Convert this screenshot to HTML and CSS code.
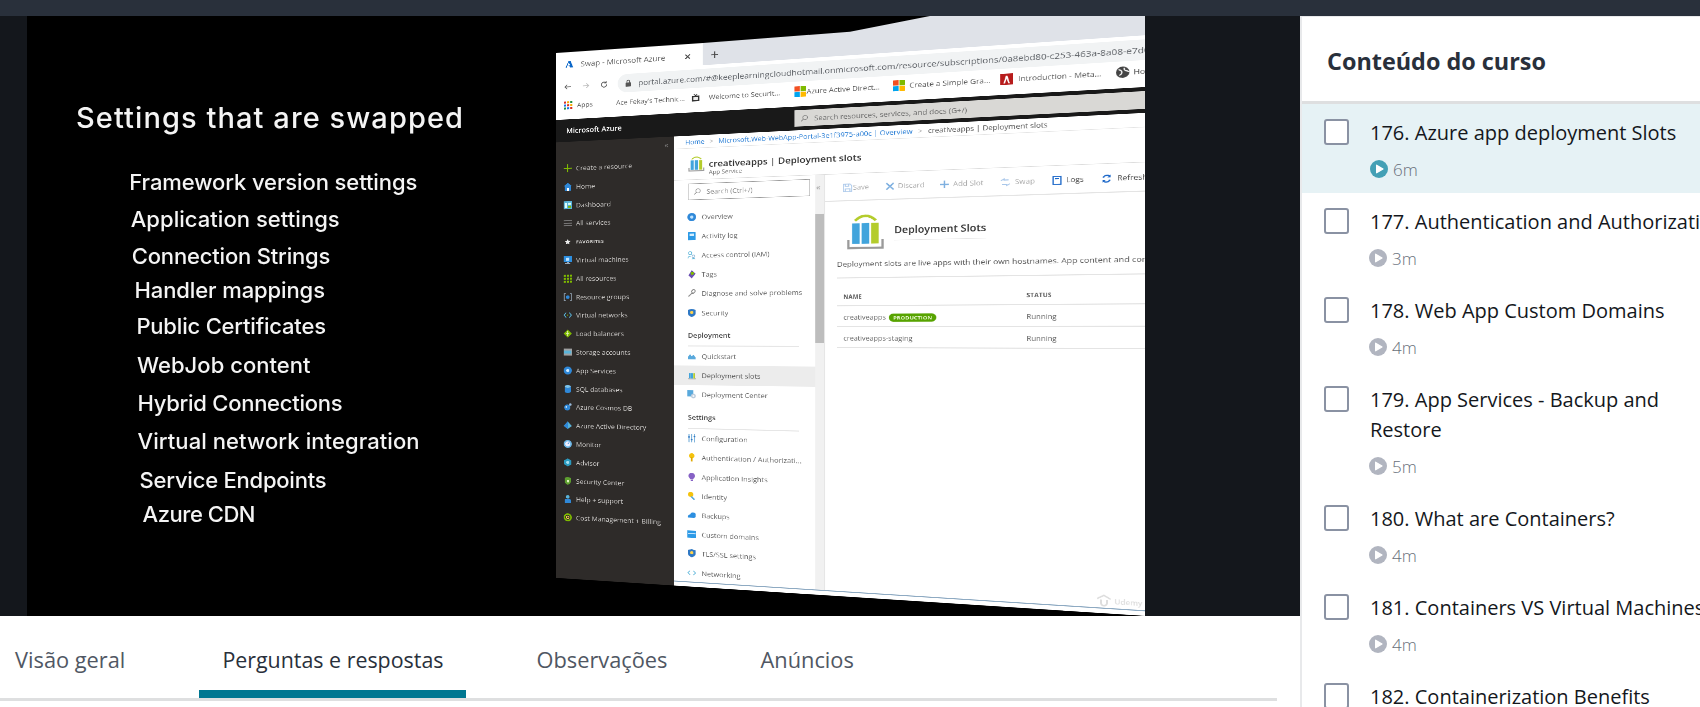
FILE: index.html
```html
<!DOCTYPE html>
<html lang="pt">
<head>
<meta charset="utf-8">
<title>Conteúdo do curso</title>
<link rel="stylesheet" href="styles.css">
</head>
<body>
<svg class="defs" width="0" height="0" aria-hidden="true">
  <symbol id="play" viewBox="0 0 18 18"><circle cx="9" cy="9" r="9" fill="currentColor"/><path d="M6.6 5.2 13 9l-6.4 3.8z" fill="#fff" stroke="#fff" stroke-width="1.2" stroke-linejoin="round"/></symbol>
  <symbol id="ms" viewBox="0 0 16 16"><rect width="7.5" height="7.5" fill="#f25022"/><rect x="8.5" width="7.5" height="7.5" fill="#7fba00"/><rect y="8.5" width="7.5" height="7.5" fill="#00a4ef"/><rect x="8.5" y="8.5" width="7.5" height="7.5" fill="#ffb900"/></symbol>
</svg>
<div class="topbar"></div>
<div class="layout">
  <main class="lesson">
    <section class="video">
      <div class="slide">
        <svg class="slide-text" viewBox="0 0 1118 600" width="1118" height="600">
          <text class="slide-title" x="49" y="112" textLength="387">Settings that are swapped</text>
          <text class="slide-item" x="102.3" y="174" textLength="288">Framework version settings</text>
          <text class="slide-item" x="103.7" y="211" textLength="209">Application settings</text>
          <text class="slide-item" x="104.8" y="248" textLength="198.6">Connection Strings</text>
          <text class="slide-item" x="107.6" y="282" textLength="190.4">Handler mappings</text>
          <text class="slide-item" x="109.4" y="318" textLength="189.6">Public Certificates</text>
          <text class="slide-item" x="110" y="357" textLength="173.6">WebJob content</text>
          <text class="slide-item" x="110.5" y="394.7" textLength="205">Hybrid Connections</text>
          <text class="slide-item" x="110.5" y="433" textLength="282">Virtual network integration</text>
          <text class="slide-item" x="112.6" y="472" textLength="187">Service Endpoints</text>
          <text class="slide-item" x="115.5" y="505.7" textLength="113">Azure CDN</text>
        </svg>
        <div class="shot-clip">
          <div class="shot">
            <div class="tabstrip">
              <div class="tab">
                <svg class="ic" viewBox="0 0 16 16"><path d="M6.5 1.5h4L15.5 14.5H9.5L8 11H4.5L10 10 6.8 4.5 2.8 14.5H.5z" fill="#0a66c8"/></svg>
                <span class="tab-name">Swap - Microsoft Azure</span>
                <span class="tab-close">×</span>
              </div>
              <span class="tab-new">+</span>
            </div>
            <div class="addr-row">
              <svg class="nav" viewBox="0 0 16 16"><path d="M14 8H3M7 3.5 2.5 8 7 12.5" fill="none" stroke="#666" stroke-width="1.6"/></svg>
              <svg class="nav" viewBox="0 0 16 16"><path d="M2 8h11M9 3.5 13.5 8 9 12.5" fill="none" stroke="#bbb" stroke-width="1.6"/></svg>
              <svg class="nav" viewBox="0 0 16 16"><path d="M13 8a5 5 0 1 1-1.5-3.5M12 1.5v3.4H8.600" fill="none" stroke="#555" stroke-width="1.6"/></svg>
              <div class="addr-pill">
                <svg class="lock" viewBox="0 0 12 14"><rect x="1" y="6" width="10" height="8" rx="1" fill="#555"/><path d="M3.500 6V4a2.500 2.500 0 0 1 5 0v2" fill="none" stroke="#555" stroke-width="1.500"/></svg>
                <span class="addr-text">portal.azure.com/#@keeplearningcloudhotmail.onmicrosoft.com/resource/subscriptions/0a8ebd80-c253-463a-8a08-e7d0</span>
              </div>
            </div>
            <div class="bookmarks">
              <svg class="ic" viewBox="0 0 16 16"><g><rect width="4" height="4" fill="#d93025"/><rect x="6" width="4" height="4" fill="#f9ab00"/><rect x="12" width="4" height="4" fill="#1e8e3e"/><rect y="6" width="4" height="4" fill="#1a73e8"/><rect x="6" y="6" width="4" height="4" fill="#d93025"/><rect x="12" y="6" width="4" height="4" fill="#f9ab00"/><rect y="12" width="4" height="4" fill="#1e8e3e"/><rect x="6" y="12" width="4" height="4" fill="#1a73e8"/><rect x="12" y="12" width="4" height="4" fill="#d93025"/></g></svg>
              <span>Apps</span>
              <span>Ace Fekay's Technic...</span>
              <svg class="ic" viewBox="0 0 16 16"><rect x="1" y="4" width="14" height="11" fill="#333"/><path d="M5 1l3 3 3-3" stroke="#333" fill="none" stroke-width="1.500"/><rect x="4" y="7" width="8" height="5" fill="#eee"/></svg>
              <span>Welcome to Securit...</span>
              <svg class="ic ic-big"><use href="#ms"/></svg>
              <span>Azure Active Direct...</span>
              <svg class="ic ic-big"><use href="#ms"/></svg>
              <span>Create a Simple Gra...</span>
              <svg class="ic ic-big" viewBox="0 0 16 16"><rect width="16" height="16" fill="#b71c1c"/><path d="M4 14 7 3h2l3 11h-2L8 7l-2 7z" fill="#fff"/></svg>
              <span>Introduction - Meta...</span>
              <svg class="ic ic-big" viewBox="0 0 16 16"><circle cx="8" cy="8" r="8" fill="#444"/><path d="M3 4q4 1 4 4t-3 4M10 2q-1 3 2 4t3 2" fill="none" stroke="#fff" stroke-width="1.500"/></svg>
              <span>Home</span>
            </div>
            <header class="az-header">
              <span class="az-brand">Microsoft Azure</span>
              <div class="az-search">
                <svg class="search-ic" viewBox="0 0 14 14"><circle cx="8.500" cy="5.500" r="4" fill="none" stroke="#777" stroke-width="1.200"/><path d="M5.500 8.500 1.500 12.500" stroke="#777" stroke-width="1.200"/></svg>
                <span>Search resources, services, and docs (G+/)</span>
              </div>
            </header>
            <div class="az-body">
              <nav class="az-nav">
                <div class="az-collapse">«</div>
                <div class="nav-row"><svg class="ic" viewBox="0 0 16 16"><path d="M8 0v16M0 8h16" stroke="#7fba00" stroke-width="2"/></svg>Create a resource</div>
                <div class="nav-row"><svg class="ic" viewBox="0 0 16 16"><path d="M8 0 16 7h-2v9H2V7H0z" fill="#2f88d8"/><rect x="6" y="10" width="4" height="6" fill="#fff"/></svg>Home</div>
                <div class="nav-row"><svg class="ic" viewBox="0 0 16 16"><rect width="16" height="16" fill="#59b4d9"/><rect x="2" y="3" width="5" height="10" fill="#dff"/><rect x="9" y="3" width="5" height="4" fill="#dff"/><rect x="9" y="9" width="5" height="4" fill="#7fba00"/></svg>Dashboard</div>
                <div class="nav-row"><svg class="ic" viewBox="0 0 16 16"><path d="M0 3h16M0 8h16M0 13h16" stroke="#8f8f8f" stroke-width="1.500"/></svg>All services</div>
                <div class="nav-row nav-fav"><svg class="ic" viewBox="0 0 16 16"><path d="M8 1l2.200 4.800 5.300.6-3.900 3.500 1.100 5.200L8 12.500 3.300 15.100l1.100-5.200L.5 6.400l5.300-.6z" fill="#eee"/></svg>FAVORITES</div>
                <div class="nav-row"><svg class="ic" viewBox="0 0 16 16"><rect width="16" height="12" fill="#2d8fe0"/><rect x="6" y="12" width="4" height="2" fill="#9ab"/><rect x="3" y="14" width="10" height="2" fill="#9ab"/><rect x="5" y="3" width="6" height="6" fill="#bfe3ff"/></svg>Virtual machines</div>
                <div class="nav-row"><svg class="ic" viewBox="0 0 16 16"><path d="M0 0h4v4H0zM6 0h4v4H6zM12 0h4v4h-4zM0 6h4v4H0zM6 6h4v4H6zM12 6h4v4h-4zM0 12h4v4H0zM6 12h4v4H6zM12 12h4v4h-4z" fill="#7fba00"/></svg>All resources</div>
                <div class="nav-row"><svg class="ic" viewBox="0 0 16 16"><path d="M4 1H1v14h3M12 1h3v14h-3" fill="none" stroke="#9ab" stroke-width="1.500"/><circle cx="8" cy="8" r="3.500" fill="#2f88d8"/></svg>Resource groups</div>
                <div class="nav-row"><svg class="ic" viewBox="0 0 16 16"><path d="M5 3 1 8l4 5M11 3l4 5-4 5" fill="none" stroke="#59b4d9" stroke-width="1.800"/><path d="M7 8h2" stroke="#7fba00" stroke-width="2"/></svg>Virtual networks</div>
                <div class="nav-row"><svg class="ic" viewBox="0 0 16 16"><path d="M8 0l8 8-8 8-8-8z" fill="#7fba00"/><path d="M8 3v10M5 8h6" stroke="#e8f5c8" stroke-width="1.500"/></svg>Load balancers</div>
                <div class="nav-row"><svg class="ic" viewBox="0 0 16 16"><rect y="1" width="16" height="14" fill="#a0a1a2"/><rect x="1" y="5" width="14" height="6" fill="#59b4d9"/></svg>Storage accounts</div>
                <div class="nav-row"><svg class="ic" viewBox="0 0 16 16"><circle cx="8" cy="8" r="8" fill="#2f88d8"/><circle cx="8" cy="8" r="3" fill="#cfe9ff"/></svg>App Services</div>
                <div class="nav-row"><svg class="ic" viewBox="0 0 16 16"><ellipse cx="8" cy="3" rx="6" ry="3" fill="#7cc4ee"/><path d="M2 3v10c0 4 12 4 12 0V3c0 4-12 4-12 0z" fill="#2f88d8"/></svg>SQL databases</div>
                <div class="nav-row"><svg class="ic" viewBox="0 0 16 16"><circle cx="7" cy="9" r="6" fill="#2f88d8"/><circle cx="13" cy="3" r="2.500" fill="#9bd"/><circle cx="5" cy="8" r="1.500" fill="#fff"/></svg>Azure Cosmos DB</div>
                <div class="nav-row"><svg class="ic" viewBox="0 0 16 16"><path d="M8 0l8 9-8 6-8-6z" fill="#59b4d9"/><path d="M8 0v15L0 9z" fill="#2f88d8"/></svg>Azure Active Directory</div>
                <div class="nav-row"><svg class="ic" viewBox="0 0 16 16"><circle cx="8" cy="8" r="8" fill="#6cb6e6"/><circle cx="8" cy="8" r="5" fill="#eef"/><path d="M8 8l3-3" stroke="#2f88d8" stroke-width="1.500"/></svg>Monitor</div>
                <div class="nav-row"><svg class="ic" viewBox="0 0 16 16"><path d="M8 0l7 4v8l-7 4-7-4V4z" fill="#2b9bc0"/><circle cx="8" cy="8" r="3" fill="#a7dff0"/></svg>Advisor</div>
                <div class="nav-row"><svg class="ic" viewBox="0 0 16 16"><path d="M8 0l6 2v7c0 4-4 6-6 7-2-1-6-3-6-7V2z" fill="#5d9e2f"/><rect x="6" y="6" width="4" height="5" fill="#dff0c0"/></svg>Security Center</div>
                <div class="nav-row"><svg class="ic" viewBox="0 0 16 16"><circle cx="8" cy="4" r="3.500" fill="#59b4d9"/><path d="M2 16V11q0-3 3-3h6q3 0 3 3v5z" fill="#2f88d8"/></svg>Help + support</div>
                <div class="nav-row"><svg class="ic" viewBox="0 0 16 16"><circle cx="8" cy="8" r="6.500" fill="none" stroke="#7fba00" stroke-width="3"/><circle cx="8" cy="8" r="2.500" fill="none" stroke="#ffd34d" stroke-width="1.500"/></svg>Cost Management + Billing</div>
              </nav>
              <div class="blade">
                <div class="crumbs"><span class="link">Home</span><span class="sep">&gt;</span><span class="link">Microsoft.Web-WebApp-Portal-3e1f3975-a00c | Overview</span><span class="sep">&gt;</span><span>creativeapps | Deployment slots</span></div>
                <div class="blade-head">
                  <svg class="blade-ic" viewBox="0 0 32 36"><path d="M7 9q9-9 18 0" fill="none" stroke="#b4cc2c" stroke-width="2"/><rect x="5" y="11" width="6" height="19" fill="#41a4dc"/><rect x="13" y="11" width="6" height="19" fill="#41a4dc"/><rect x="21" y="11" width="6" height="19" fill="#b4cc2c"/><path d="M2 26v6h28v-6" fill="none" stroke="#9a9a9a" stroke-width="2"/></svg>
                  <div class="blade-names">
                    <div class="blade-title">creativeapps | Deployment slots</div>
                    <div class="blade-sub">App Service</div>
                  </div>
                </div>
                <div class="blade-main">
                  <aside class="menu">
                    <div class="menu-scroll">
                      <div class="menu-search-row">
                        <div class="menu-search"><svg class="search-ic" viewBox="0 0 14 14"><circle cx="8.500" cy="5.500" r="4" fill="none" stroke="#888" stroke-width="1.200"/><path d="M5.500 8.500 1.500 12.500" stroke="#888" stroke-width="1.200"/></svg><span>Search (Ctrl+/)</span></div>
                      </div>
                      <div class="m-row"><svg class="ic" viewBox="0 0 16 16"><circle cx="8" cy="8" r="8" fill="#2f88d8"/><circle cx="8" cy="8" r="3" fill="#bfe3ff"/></svg>Overview</div>
                      <div class="m-row"><svg class="ic" viewBox="0 0 16 16"><rect x="1" width="14" height="16" rx="1" fill="#2d9ae6"/><rect x="4" y="3" width="8" height="5" fill="#d5efff"/></svg>Activity log</div>
                      <div class="m-row"><svg class="ic" viewBox="0 0 16 16"><circle cx="5" cy="4" r="3" fill="none" stroke="#59b4d9" stroke-width="1.300"/><circle cx="11" cy="10" r="2.500" fill="none" stroke="#8fb8d8" stroke-width="1.300"/><path d="M1 14q1-5 5-4M8 16q3-3 7 0" fill="none" stroke="#59b4d9" stroke-width="1.300"/></svg>Access control (IAM)</div>
                      <div class="m-row"><svg class="ic" viewBox="0 0 16 16"><path d="M8 0l7 7-7 9-6-6z" fill="#6a4fb3"/><circle cx="9" cy="6" r="3" fill="#7fba00"/></svg>Tags</div>
                      <div class="m-row"><svg class="ic" viewBox="0 0 16 16"><path d="M2 14 9 7M14 2a3.500 3.500 0 0 0-5 5l2 1 3-3z" fill="none" stroke="#888" stroke-width="1.800"/></svg>Diagnose and solve problems</div>
                      <div class="m-row"><svg class="ic" viewBox="0 0 16 16"><path d="M8 0l7 2v7c0 4-5 6-7 7-2-1-7-3-7-7V2z" fill="#2f78c4"/><circle cx="8" cy="7" r="3" fill="#ffd34d"/></svg>Security</div>
                      <div class="m-head">Deployment</div>
                      <div class="m-row"><svg class="ic" viewBox="0 0 16 16"><path d="M1 14V9l4-5 3 4 3-3 4 5v4z" fill="#59a9dc"/></svg>Quickstart</div>
                      <div class="m-row m-active"><svg class="ic" viewBox="0 0 16 16"><rect x="3" y="4" width="3" height="10" fill="#41a4dc"/><rect x="7" y="4" width="3" height="10" fill="#41a4dc"/><rect x="11" y="4" width="3" height="10" fill="#b4cc2c"/><path d="M2 13v2h13v-2" stroke="#999" fill="none"/></svg>Deployment slots</div>
                      <div class="m-row"><svg class="ic" viewBox="0 0 16 16"><rect width="11" height="12" fill="#59a9dc"/><circle cx="11" cy="11" r="4.500" fill="#bcd"/><circle cx="11" cy="11" r="1.800" fill="#fff"/></svg>Deployment Center</div>
                      <div class="m-head m-head-settings">Settings</div>
                      <div class="m-row"><svg class="ic" viewBox="0 0 16 16"><path d="M3 0v16M8 0v16M13 0v16" stroke="#7fb4dc" stroke-width="2"/><path d="M3 4v3M8 9v3M13 3v3" stroke="#2f78c4" stroke-width="3"/></svg>Configuration</div>
                      <div class="m-row"><svg class="ic" viewBox="0 0 16 16"><circle cx="8" cy="5" r="5" fill="#f4c20d"/><rect x="6.500" y="8" width="3" height="8" fill="#e0a800"/></svg>Authentication / Authorizati...</div>
                      <div class="m-row"><svg class="ic" viewBox="0 0 16 16"><path d="M8 0a6 6 0 0 1 6 6c0 3-3 5-4 7H6C5 11 2 9 2 6a6 6 0 0 1 6-6z" fill="#8661c5"/><rect x="6" y="14" width="4" height="2" fill="#8661c5"/></svg>Application Insights</div>
                      <div class="m-row"><svg class="ic" viewBox="0 0 16 16"><circle cx="6" cy="5" r="5" fill="#f4c20d"/><path d="M7 9l6 6" stroke="#59a9dc" stroke-width="3"/></svg>Identity</div>
                      <div class="m-row"><svg class="ic" viewBox="0 0 16 16"><path d="M1 13q-1-5 4-6 2-5 7-4 4 1 3 5 1 5-3 5z" fill="#2d8fe0"/></svg>Backups</div>
                      <div class="m-row"><svg class="ic" viewBox="0 0 16 16"><rect y="1" width="16" height="14" fill="#2d9ae6"/><rect x="1" y="6" width="14" height="2" fill="#bfe3ff"/></svg>Custom domains</div>
                      <div class="m-row"><svg class="ic" viewBox="0 0 16 16"><path d="M8 0l7 2v7c0 4-5 6-7 7-2-1-7-3-7-7V2z" fill="#2f78c4"/><circle cx="8" cy="7" r="3" fill="#ffd34d"/></svg>TLS/SSL settings</div>
                      <div class="m-row"><svg class="ic" viewBox="0 0 16 16"><path d="M5 4 1 8l4 4M11 4l4 4-4 4" fill="none" stroke="#59b4d9" stroke-width="1.500"/></svg>Networking</div>
                    </div>
                    <div class="menu-bar"><div class="menu-thumb"></div></div>
                    <span class="menu-collapse">«</span>
                  </aside>
                  <div class="pane">
                    <div class="toolbar">
                      <svg class="ic" viewBox="0 0 16 16"><path d="M1 1h11l3 3v11H1zM4 10h8v5H4zM4 1h6v4H4z" fill="none" stroke="#a9c7ea" stroke-width="1.600"/></svg><span class="off">Save</span>
                      <svg class="ic" viewBox="0 0 16 16"><path d="M2 2l12 12M14 2 2 14" stroke="#7fb0e0" stroke-width="2.500"/></svg><span class="off">Discard</span>
                      <svg class="ic" viewBox="0 0 16 16"><path d="M8 1v14M1 8h14" stroke="#7fb0e0" stroke-width="2.500"/></svg><span class="off">Add Slot</span>
                      <svg class="ic" viewBox="0 0 16 16"><path d="M1 5l5-3v2h7M15 11l-5 3v-2H3" fill="none" stroke="#a9c7ea" stroke-width="1.800"/></svg><span class="off">Swap</span>
                      <svg class="ic" viewBox="0 0 16 16"><rect x="2" y="1" width="12" height="14" fill="none" stroke="#1a66c8" stroke-width="1.800"/><rect x="5" y="4" width="6" height="2" fill="#1a66c8"/></svg><span>Logs</span>
                      <svg class="ic" viewBox="0 0 16 16"><path d="M3 6a6 6 0 0 1 10-2M13 10a6 6 0 0 1-10 2" fill="none" stroke="#1a66c8" stroke-width="2.200"/><path d="M14 1v5H9zM2 15v-5h5z" fill="#1a66c8"/></svg><span>Refresh</span>
                    </div>
                    <div class="intro">
                      <svg class="intro-ic" viewBox="0 0 40 44"><path d="M9 10q11-11 22 0" fill="none" stroke="#b4cc2c" stroke-width="3"/><rect x="6" y="13" width="8" height="24" fill="#41a4dc"/><rect x="16" y="13" width="8" height="24" fill="#41a4dc"/><rect x="26" y="13" width="8" height="24" fill="#b4cc2c"/><path d="M2 32v10h36V32" fill="none" stroke="#9a9a9a" stroke-width="2.500"/></svg>
                      <h2 class="intro-title">Deployment Slots</h2>
                    </div>
                    <p class="desc"><span>Deployment slots are live apps with their own hostnames. App content and configuration elements can be swapped</span></p>
                    <div class="tbl-row tbl-head"><span>NAME</span><span>STATUS</span></div>
                    <div class="tbl-row"><span>creativeapps <b class="badge">PRODUCTION</b></span><span>Running</span></div>
                    <div class="tbl-row"><span>creativeapps-staging</span><span>Running</span></div>
                    <div class="watermark"><svg class="wm-ic" viewBox="0 0 24 24"><path d="M12 1 22 7v3L12 4 2 10V7z" fill="#ddd"/><path d="M6 10v6a6 6 0 0 0 12 0v-6h-3v6a3 3 0 0 1-6 0v-6z" fill="#ddd"/></svg>Udemy</div>
                  </div>
                </div>
                <div class="blade-foot"></div>
              </div>
            </div>
          </div>
        </div>
      </div>
    </section>
    <nav class="tabs">
      <a class="tabs-item tabs-first">Visão geral</a>
      <a class="tabs-item tabs-on">Perguntas e respostas</a>
      <a class="tabs-item tabs-third">Observações</a>
      <a class="tabs-item tabs-fourth">Anúncios</a>
    </nav>
  </main>
  <aside class="course">
    <h1 class="course-head">Conteúdo do curso</h1>
    <div class="item item-on">
      <span class="check"></span>
      <div class="item-body">
        <div class="item-title">176. Azure app deployment Slots</div>
        <div class="item-meta"><svg class="play"><use href="#play"/></svg>6m</div>
      </div>
    </div>
    <div class="item">
      <span class="check"></span>
      <div class="item-body">
        <div class="item-title">177. Authentication and Authorization</div>
        <div class="item-meta"><svg class="play"><use href="#play"/></svg>3m</div>
      </div>
    </div>
    <div class="item">
      <span class="check"></span>
      <div class="item-body">
        <div class="item-title">178. Web App Custom Domains</div>
        <div class="item-meta"><svg class="play"><use href="#play"/></svg>4m</div>
      </div>
    </div>
    <div class="item">
      <span class="check"></span>
      <div class="item-body">
        <div class="item-title">179. App Services - Backup and Restore</div>
        <div class="item-meta"><svg class="play"><use href="#play"/></svg>5m</div>
      </div>
    </div>
    <div class="item">
      <span class="check"></span>
      <div class="item-body">
        <div class="item-title">180. What are Containers?</div>
        <div class="item-meta"><svg class="play"><use href="#play"/></svg>4m</div>
      </div>
    </div>
    <div class="item">
      <span class="check"></span>
      <div class="item-body">
        <div class="item-title">181. Containers VS Virtual Machines</div>
        <div class="item-meta"><svg class="play"><use href="#play"/></svg>4m</div>
      </div>
    </div>
    <div class="item">
      <span class="check"></span>
      <div class="item-body">
        <div class="item-title">182. Containerization Benefits</div>
        <div class="item-meta"><svg class="play"><use href="#play"/></svg>4m</div>
      </div>
    </div>
  </aside>
</div>
</body>
</html>
```

FILE: styles.css
```css
* { box-sizing: border-box; }
html, body { margin: 0; height: 100%; overflow: hidden; background: #fff; }
body { font-family: "Open Sans", "Noto Sans", sans-serif; color: #29303b; }
.defs { position: absolute; }

.topbar { height: 16px; background: #29303b; }
.layout { display: flex; height: 691px; overflow: hidden; }
.lesson { width: 1300px; flex: none; }
.video { height: 600px; background: #14171c; padding-left: 27px; }
.slide { position: relative; width: 1118px; height: 600px; background: #000; overflow: hidden; }
.slide-text { display: block; position: absolute; left: 0; top: 0; font-family: Inter, "Open Sans", sans-serif; fill: #f4f4f4; filter: blur(.3px); }
.slide-title { font-size: 29px; font-weight: 500; }
.slide-item { font-size: 22px; font-weight: 500; }

/* tilted screenshot inside the video frame */
.shot-clip { position: absolute; inset: 0; clip-path: polygon(529px 37px, 676px 27px, 823px 15.7px, 903px 0, 1118px 0, 1118px 600px, 529px 562px); }
.shot {
  position: absolute; left: 0; top: 0; width: 1000px; height: 1050px;
  transform-origin: 0 0;
  transform: matrix3d(.438925, -.04254, 0, -.00013425, 0, .4978, 0, 0, 0, 0, 1, 0, 529, 39.3, 0, 1);
  filter: blur(.7px);
  display: flex; flex-direction: column; background: #fff; color: #444;
  font-size: 13px; white-space: nowrap;
}
.ic { width: 16px; height: 16px; flex: none; display: block; }
.tabstrip { height: 40px; flex: none; display: flex; align-items: center; background: #dfe2e8; position: relative; }
.tabstrip::before { content: ""; position: absolute; left: 0; right: 0; top: -60px; height: 60px; background: linear-gradient(to right, #fff 277px, #dfe2e8 277px); }
.tab { width: 277px; height: 40px; background: #fff; display: flex; align-items: center; padding-left: 18px; font-size: 15px; color: #666; position: relative; }
.tab-name { margin-left: 14px; }
.tab-close { margin-left: 35px; font-size: 22px; color: #444; font-weight: 600; }
.tab-new { margin-left: 14px; font-size: 27px; color: #444; position: relative; }
.addr-row { height: 50px; flex: none; display: flex; align-items: center; padding-left: 15px; background: #fff; }
.nav { width: 16px; height: 16px; margin-right: 19px; flex: none; }
.nav:nth-child(3) { margin-right: 0; }
.addr-pill { margin-left: 18px; flex: 1; height: 36px; border-radius: 18px 0 0 18px; background: #f1f3f4; display: flex; align-items: center; padding-left: 14px; overflow: hidden; }
.lock { width: 12px; height: 14px; flex: none; margin-right: 13px; }
.addr-text { font-size: 15px; color: #5f6368; }
.bookmarks { height: 40px; flex: none; display: grid; grid-template-columns: 25px 75px 140px 32px 152px 21px 146px 27px 146px 28px 149px 26px 1fr; align-items: center; padding: 0 0 16px 16px; font-size: 13px; color: #555; background: #fff; overflow: hidden; }
.ic-big { width: 20px; height: 20px; }
.az-header { height: 45px; flex: none; background: #191919; display: flex; align-items: center; padding-left: 20px; }
.az-brand { width: 420px; color: #fff; font-size: 14px; font-weight: 600; }
.az-search { flex: 1; height: 31px; background: #d9d8d5; display: flex; align-items: center; padding-left: 10px; color: #666; font-size: 13px; }
.search-ic { width: 14px; height: 14px; margin-right: 10px; flex: none; }
.az-body { flex: 1; display: flex; min-height: 0; }
.az-nav { width: 224px; flex: none; background: #2e2b29; color: #cfcdcb; font-size: 13px; display: flex; flex-direction: column; }
.az-collapse { height: 34.600px; text-align: right; padding: 6px 10px 0 0; color: #888; font-size: 14px; }
.nav-row { height: 36.800px; flex: none; display: flex; align-items: center; gap: 8px; padding-left: 15px; }
.nav-fav { font-size: 9.500px; font-weight: 700; letter-spacing: .3px; }
.nav-fav .ic { width: 12px; height: 12px; margin: 0 2px; }

.blade { flex: 1; min-width: 0; display: flex; flex-direction: column; background: #fff; }
.crumbs { height: 25px; flex: none; display: flex; align-items: center; padding-left: 21px; font-size: 12.500px; color: #555; border-bottom: 1px solid #e4e4e4; }
.link { color: #2a7fd6; }
.sep { margin: 0 9px; color: #aaa; }
.blade-head { height: 61px; flex: none; display: flex; align-items: center; padding-left: 26px; gap: 7px; border-bottom: 1px solid #dcdcdc; }
.blade-ic { width: 31px; height: 36px; flex: none; }
.blade-names { padding-top: 16px; }
.blade-title { font-size: 17px; font-weight: 600; color: #333; line-height: 18px; }
.blade-sub { font-size: 11px; color: #777; line-height: 14px; }
.blade-main { flex: 1; min-height: 0; display: flex; }
.menu { width: 269px; flex: none; position: relative; border-right: 2px solid #e6e6e6; overflow: hidden; display: flex; }
.menu-scroll { width: 252px; flex: none; color: #666; font-size: 13px; }
.menu-search-row { height: 53px; padding: 7px 0 0 26px; }
.menu-search { width: 217px; height: 32px; border: 1px solid #9a9a9a; display: flex; align-items: center; padding-left: 9px; color: #888; font-size: 12.500px; }
.menu-collapse { position: absolute; right: 6px; top: 12px; font-size: 15px; color: #999; }
.m-row { height: 37.200px; display: flex; align-items: center; gap: 10px; padding-left: 25px; }
.m-active { background: #ececec; color: #555; }
.m-head { height: 47px; margin-left: 26px; width: 198px; padding-top: 16px; font-weight: 600; color: #444; border-bottom: 2px solid #e6e6e6; }
.m-head-settings { height: 48px; padding-top: 16px; }
.menu-bar { width: 15px; margin-left: 0; flex: none; background: #f1f1f1; padding-top: 73px; }
.menu-thumb { height: 243px; background: #bdbdbd; }
.pane { flex: 1; min-width: 0; position: relative; overflow: hidden; }
.toolbar { height: 51px; display: grid; grid-template-columns: 17px 54px 21px 68px 22px 75px 23px 57px 22px 53px 24px 1fr; align-items: center; padding: 2px 0 0 30px; font-size: 12.500px; color: #444; border-bottom: 2px solid #e4e4e4; }
.off { color: #aaa; }
.intro { height: 98px; display: flex; align-items: flex-start; padding: 21px 0 0 36px; gap: 16px; }
.intro-ic { width: 64px; height: 70px; flex: none; }
.intro-title { margin: 22px 0 0; padding-bottom: 7px; font-size: 17.500px; font-weight: 600; color: #333; border-bottom: 1px solid #e6e6e6; }
.desc { margin: 0 0 0 20px; height: 46px; padding-top: 10px; font-size: 13.300px; color: #555; border-bottom: 2px solid #e4e4e4; overflow: hidden; }
.tbl-row { margin-left: 20px; height: 39px; display: flex; align-items: center; padding: 3px 0 0 11px; font-size: 12px; color: #666; border-bottom: 2px solid #e4e4e4; }
.tbl-row > span:first-child { width: 297px; flex: none; }
.tbl-head { height: 52px; padding-top: 18px; font-size: 10px; font-weight: 700; color: #555; letter-spacing: .3px; }
.badge { display: inline-block; margin-left: 2px; padding: 1px 7px; border-radius: 9px; background: #57a300; color: #e8f8d0; font-size: 9.500px; font-weight: 700; line-height: 13px; }
.watermark { position: absolute; right: 4px; bottom: 0; display: flex; align-items: center; gap: 4px; color: #ddd; font-size: 12px; font-weight: 600; }
.wm-ic { width: 24px; height: 24px; }
.blade-foot { height: 10px; flex: none; background: #fff; border-top: 2px solid #8eaac2; }

/* lesson tabs */
.tabs { height: 85px; display: flex; align-items: flex-start; margin-right: 23px; border-bottom: 3px solid #dedfe0; font-size: 21.800px; color: #505763; }
.tabs-item { display: block; height: 82px; padding-top: 30px; line-height: 28px; }
.tabs-first { margin-left: 15px; }
.tabs-on { margin-left: 74px; padding: 30px 23px 0; color: #29303b; border-bottom: 8px solid #007791; font-size: 21.400px; }
.tabs-third { margin-left: 70px; }
.tabs-fourth { margin-left: 93px; }

/* course sidebar */
.course { width: 480px; flex: none; background: #fff; border-left: 2px solid #e8e9eb; border-top: 1px solid #e8e9eb; }
.course-head { margin: 0; height: 87px; padding: 29px 0 0 25px; font-size: 23.400px; line-height: 30px; font-weight: 700; color: #29303b; border-bottom: 3px solid #dedfe0; }
.item { display: flex; align-items: flex-start; padding: 15px 0 14px 22px; gap: 21px; }
.item-on { background: #e6f2f5; }
.check { width: 25px; height: 26px; flex: none; border: 2px solid #8a92a3; border-radius: 3px; background: #fff; }
.item-body { width: 358px; flex: none; }
.item-title { margin-top: -1px; font-size: 20px; line-height: 30px; color: #14171c; }
.item-meta { display: flex; align-items: center; gap: 5px; margin-top: 11px; height: 20px; font-size: 17px; color: #686f7a; font-weight: 300; }
.play { width: 18px; height: 18px; flex: none; color: #b1b5c0; margin-left: -1px; }
.item-on .play { color: #43a0b5; margin-left: 0; }
```
